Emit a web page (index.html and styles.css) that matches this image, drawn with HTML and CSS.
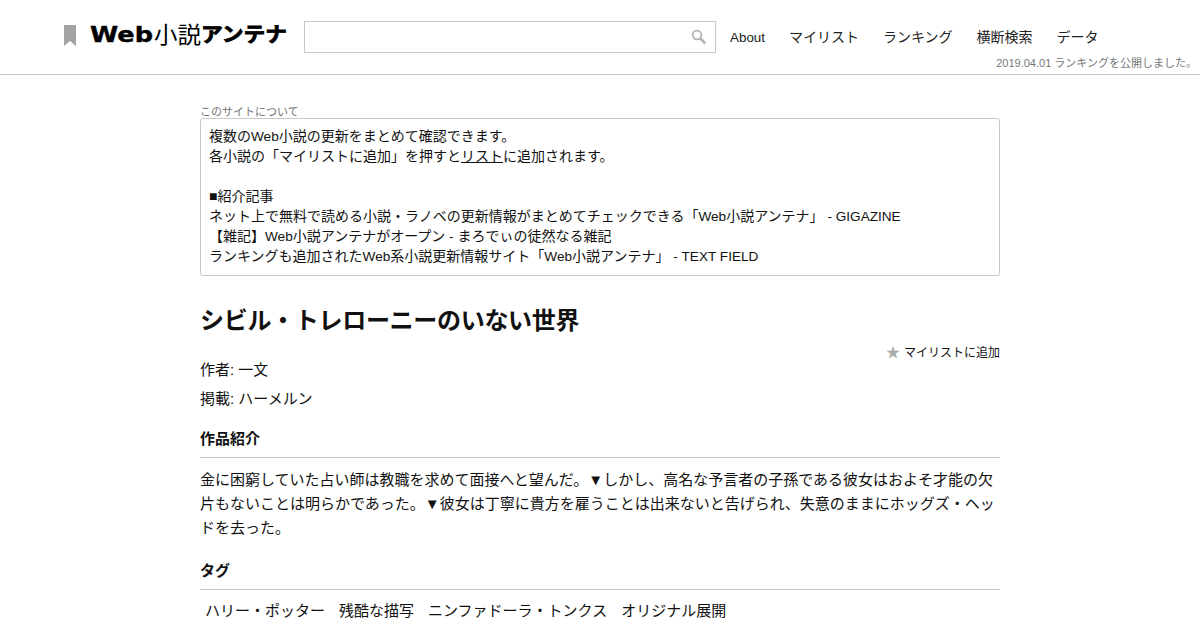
FILE: index.html
```html
<!DOCTYPE html>
<html lang="ja">
<head>
<meta charset="utf-8">
<title>Web小説アンテナ</title>
<link rel="stylesheet" href="styles.css">
</head>
<body>
<header class="site-header">
  <a class="logo" href="#">
    <svg class="logo-mark" width="12" height="21" viewBox="0 0 12 21"><path d="M0 0H12V21L6 16L0 21Z" fill="#a3a3a3"/></svg>
    <svg class="logo-text" width="204" height="28" viewBox="0 0 204 28">
      <text class="logo-web" x="0" y="21" textLength="63" lengthAdjust="spacingAndGlyphs">Web</text>
      <text class="logo-kanji" x="64" y="22" textLength="47" lengthAdjust="spacingAndGlyphs">小説</text>
      <text class="logo-kana" x="111" y="21" textLength="86" lengthAdjust="spacingAndGlyphs">アンテナ</text>
    </svg>
  </a>
  <form class="search">
    <svg class="search-icon" width="16" height="16" viewBox="0 0 16 16"><circle cx="6" cy="6" r="4.3" fill="none" stroke="#b4b4b4" stroke-width="1.8"/><path d="M9.3 9.3L14.3 14.5" stroke="#b4b4b4" stroke-width="2.6"/></svg>
  </form>
  <nav class="nav">
    <a class="nav-about" href="#">About</a>
    <a href="#">マイリスト</a>
    <a href="#">ランキング</a>
    <a href="#">横断検索</a>
    <a href="#">データ</a>
  </nav>
  <p class="notice">2019.04.01 ランキングを公開しました。</p>
</header>
<main class="content">
  <section class="about">
    <h2 class="about-label">このサイトについて</h2>
    <div class="about-box">
      複数の<span class="latin">Web</span>小説の更新をまとめて確認できます。<br>
      各小説の「マイリストに追加」を押すと<a href="#">リスト</a>に追加されます。<br>
      <br>
      ■紹介記事<br>
      ネット上で無料で読める小説・ラノベの更新情報がまとめてチェックできる「<span class="latin">Web</span>小説アンテナ」<span class="latin"> - GIGAZINE</span><br>
      【雑記】<span class="latin">Web</span>小説アンテナがオープン<span class="latin"> - </span>まろでぃの徒然なる雑記<br>
      ランキングも追加された<span class="latin">Web</span>系小説更新情報サイト「<span class="latin">Web</span>小説アンテナ」<span class="latin"> - TEXT FIELD</span>
    </div>
  </section>
  <article class="novel">
    <h1 class="title">シビル・トレローニーのいない世界</h1>
    <div class="add-row">
      <a class="add" href="#"><span class="star">★</span>マイリストに追加</a>
    </div>
    <p class="meta">作者: 一文</p>
    <p class="meta">掲載: ハーメルン</p>
    <h3 class="section-title">作品紹介</h3>
    <p class="intro">金に困窮していた占い師は教職を求めて面接へと望んだ。▼しかし、高名な予言者の子孫である彼女はおよそ才能の欠片もないことは明らかであった。▼彼女は丁寧に貴方を雇うことは出来ないと告げられ、失意のままにホッグズ・ヘッドを去った。</p>
    <h3 class="section-title">タグ</h3>
    <ul class="tags">
      <li>ハリー・ポッター</li>
      <li>残酷な描写</li>
      <li>ニンファドーラ・トンクス</li>
      <li>オリジナル展開</li>
    </ul>
  </article>
</main>
</body>
</html>
```
FILE: styles.css
```css
* { box-sizing: border-box; }
html, body { margin: 0; padding: 0; height: 630px; overflow: hidden; }
body {
  background: #fff;
  color: #111;
  font-family: "Liberation Sans", "Noto Sans CJK JP", sans-serif;
  font-size: 15px;
}
a { color: inherit; text-decoration: none; }
.site-header {
  position: relative;
  display: flex;
  align-items: flex-start;
  height: 75px;
  padding: 21px 0 0 64px;
  border-bottom: 1px solid #c8c8c8;
}
.logo { display: flex; align-items: center; width: 240px; height: 28px; }
.logo-mark { margin: 0; flex: none; }
.logo-text { margin-left: 14px; flex: none; }
.logo-text text { fill: #000; }
.logo-web { font-family: "DejaVu Sans", sans-serif; font-size: 22px; font-weight: 700; stroke: #000; stroke-width: 0.4px; }
.logo-kanji { font-size: 23px; font-weight: 400; }
.logo-kana { font-size: 20px; font-weight: 700; stroke: #000; stroke-width: 0.8px; }
.search {
  position: relative;
  width: 412px;
  height: 32px;
  border: 1px solid #c8c8c8;
}
.search-icon { position: absolute; right: 8px; top: 7px; }
.nav { display: flex; gap: 24px; margin: -1px 0 0 14px; height: 32px; align-items: center; font-size: 14px; color: #222; }
.nav-about { font-size: 13.4px; margin-top: 2px; }
.notice {
  position: absolute;
  right: 3px;
  top: 54px;
  margin: 0;
  font-size: 11px;
  color: #777;
}
.content { width: 800px; margin: 0 auto; }
.about { padding-top: 30px; }
.about-label { margin: 0; height: 13px; font-size: 11px; line-height: 14px; font-weight: 400; color: #777; }
.about-box {
  height: 158px;
  padding: 7px 8px;
  border: 1px solid #c8c8c8;
  border-radius: 3px;
  font-size: 14px;
  line-height: 20px;
}
.about-box a { text-decoration: underline; }
.latin { font-size: 13.6px; line-height: 1; }
.title { margin: 30px 0 0; font-size: 24px; line-height: 30px; font-weight: 700; letter-spacing: -0.3px; }
.add-row { display: flex; justify-content: flex-end; height: 14px; margin-top: 9px; }
.add { font-size: 12px; line-height: 14px; }
.star { color: #aaa; font-size: 14px; margin-right: 4px; }
.meta { margin: 0; font-size: 15px; line-height: 29px; }
.meta:first-of-type { margin-top: -4px; }
.section-title { margin: 15px 0 0; padding-bottom: 7px; font-size: 15px; line-height: 22px; font-weight: 700; border-bottom: 1px solid #c8c8c8; }
.intro { margin: 0; padding-top: 10px; font-size: 15px; line-height: 24px; }
.intro + .section-title { margin-top: 20px; }
.tags { display: flex; gap: 14px; margin: 0; padding: 11px 5px 0; list-style: none; font-size: 15px; line-height: 20px; }
```
